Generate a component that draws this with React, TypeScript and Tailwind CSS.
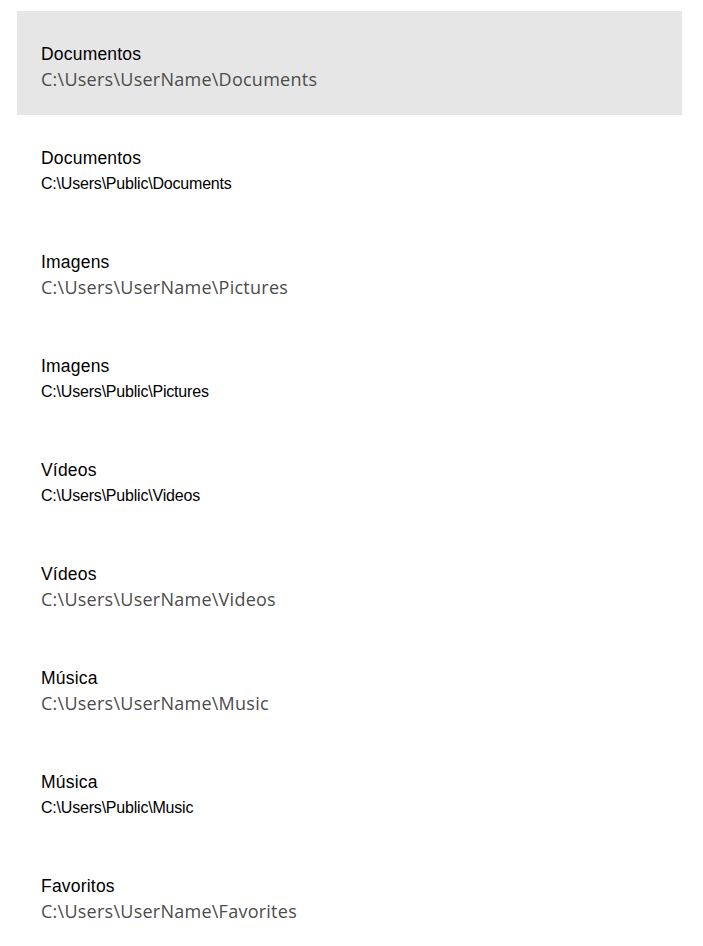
const items: { title: string; path: string; publicPath: boolean; selected?: boolean }[] = [
  { title: "Documentos", path: "C:\\Users\\UserName\\Documents", publicPath: false, selected: true },
  { title: "Documentos", path: "C:\\Users\\Public\\Documents", publicPath: true },
  { title: "Imagens", path: "C:\\Users\\UserName\\Pictures", publicPath: false },
  { title: "Imagens", path: "C:\\Users\\Public\\Pictures", publicPath: true },
  { title: "Vídeos", path: "C:\\Users\\Public\\Videos", publicPath: true },
  { title: "Vídeos", path: "C:\\Users\\UserName\\Videos", publicPath: false },
  { title: "Música", path: "C:\\Users\\UserName\\Music", publicPath: false },
  { title: "Música", path: "C:\\Users\\Public\\Music", publicPath: true },
  { title: "Favoritos", path: "C:\\Users\\UserName\\Favorites", publicPath: false },
];

export default function App() {
  return (
    <div className="min-h-[946px] bg-white pt-[11px] font-['Liberation_Sans',Arial,sans-serif]">
      <ul className="ml-[17px] w-[665px]">
        {items.map((it, i) => (
          <li
            key={i}
            className={`flex h-[104px] flex-col pl-6 pt-[33px] ${it.selected ? "bg-[#e6e6e6]" : ""}`}
          >
            <span className="text-[17.5px] leading-[20px] tracking-[0.2px] text-black">{it.title}</span>
            {it.publicPath ? (
              <span className="mt-[5px] text-[16px] leading-[22px] tracking-[-0.2px] text-black">{it.path}</span>
            ) : (
              <span className="mt-[3px] font-['Open_Sans',sans-serif] text-[18px] leading-[24px] tracking-[0.25px] text-[#4c4c4c]">
                {it.path}
              </span>
            )}
          </li>
        ))}
      </ul>
    </div>
  );
}
